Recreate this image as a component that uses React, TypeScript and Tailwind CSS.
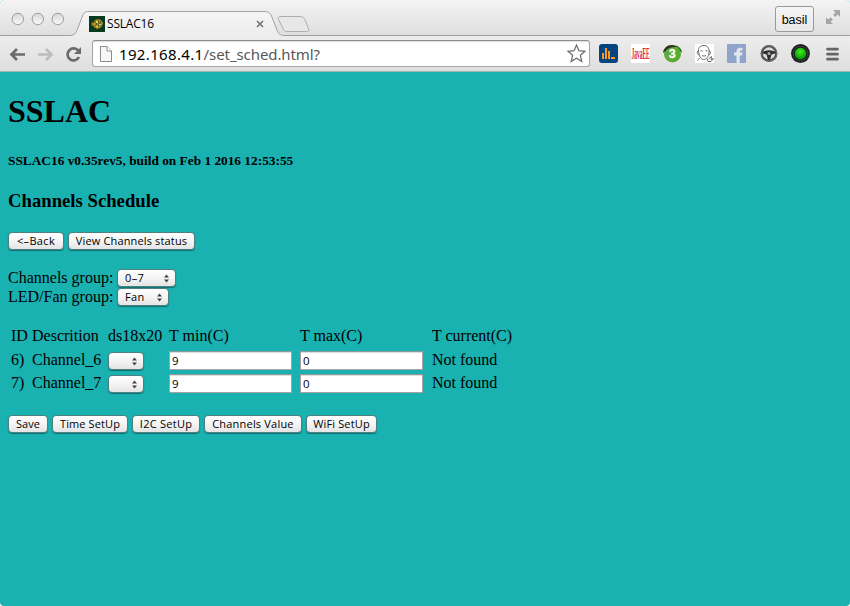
import React from "react";

const lucida = "font-['Open_Sans','Noto_Sans',sans-serif]";

function Button({ label, className }: { label: string; className: string }) {
  return (
    <button
      className={`h-[18px] shrink-0 whitespace-nowrap rounded-[4px] border border-[#4f8080] bg-linear-to-b from-white via-[#f6f6f6] via-45% to-[#e4e4e4] text-center text-[11px] leading-[16px] text-black shadow-[0_1px_1px_rgba(0,60,60,0.55)] ${lucida} ${className}`}
    >
      {label}
    </button>
  );
}

function Select({ value, className }: { value: string; className: string }) {
  return (
    <div
      className={`flex h-[18px] shrink-0 items-center justify-between rounded-[4px] border border-[#4f8080] bg-linear-to-b from-white via-[#f6f6f6] via-45% to-[#e4e4e4] pr-[5px] pl-[7px] text-[11px] leading-[16px] tracking-[0.400px] text-black shadow-[0_1px_1px_rgba(0,60,60,0.55)] ${lucida} ${className}`}
    >
      <span>{value}</span>
      <svg width="7" height="9" viewBox="0 0 7 9" fill="#444">
        <path d="M3.500 0.500 6 3.500H1ZM3.500 8.500 1 5.500H6Z" />
      </svg>
    </div>
  );
}

function Field({ value }: { value: string }) {
  return (
    <input
      readOnly
      value={value}
      className={`mt-px block h-[19px] w-[123px] border border-[#a5a5a5] border-t-[#8c9c9c] bg-white px-[2px] text-[11.500px] leading-[16px] text-black shadow-[inset_0_1px_0_#ddd] outline-none ${lucida}`}
    />
  );
}

function TabStrip() {
  return (
    <div className="relative flex h-[36px] items-start bg-linear-to-b from-[#f4f4f4] to-[#dedede]">
      <svg className="absolute inset-0" width="850" height="36" viewBox="0 0 850 36">
        <defs>
          <linearGradient id="tab" x1="0" y1="0" x2="0" y2="1">
            <stop offset="0" stopColor="#f5f5f5" />
            <stop offset="1" stopColor="#ededed" />
          </linearGradient>
          <linearGradient id="light" x1="0" y1="0" x2="0" y2="1">
            <stop offset="0" stopColor="#d6d6d6" />
            <stop offset="1" stopColor="#fafafa" />
          </linearGradient>
        </defs>
        <path
          d="M0 35.500H70C75 35.500 76 33 77.500 29L82.500 16C84 12.500 85 11.500 89 11.500H264C268 11.500 270 12.500 271.500 16L277 30C278.500 34 280 35.500 285 35.500H850V37H0Z"
          fill="url(#tab)"
          stroke="#a0a0a0"
        />
        <path
          d="M281 16.500H300C302.500 16.500 304 17.500 305 20L308.500 28.500C309.500 31 308.500 31.500 306.500 31.500H288C285 31.500 284 31 283 28.500L278.500 19.500C277.500 17.500 278.500 16.500 281 16.500Z"
          fill="#e7e7e7"
          stroke="#acacac"
        />
        {[17.8, 37.8, 57.8].map((x) => (
          <circle key={x} cx={x} cy="19" r="5.700" fill="url(#light)" stroke="#9d9d9d" />
        ))}
        <g fill="#a5a5a5">
          <path d="M833 10H840V17L837.600 14.600 835.300 16.900 833.100 14.700 835.400 12.400Z" />
          <path d="M826 24V17.200L828.300 19.500 830.600 17.200 832.900 19.500 830.600 21.700 833 24Z" />
        </g>
      </svg>
      <div className="relative mt-[16px] ml-[89px] flex h-[16px] w-[176px] items-center">
        <svg width="16" height="16" viewBox="0 0 16 16">
          <rect width="16" height="16" fill="#063b20" />
          <path d="M2 6 4.500 7 6 4 9 3 12 4 14 7 13 10 11 12 8 13 5 11 4 9 2 10 3 8Z" fill="#b98d25" />
          <path d="M6 5 8 8 6 10M9 4 10 7 9 11M12 5 11 8 12 10" fill="none" stroke="#2d4920" strokeWidth="0.800" />
          <path d="M7 5H9V7H7ZM10 8H12V9H10ZM7 10H9V11H7Z" fill="#efce55" />
        </svg>
        <span className={`ml-[2px] text-[12px] leading-[16px] tracking-[-0.200px] text-black ${lucida}`}>SSLAC16</span>
        <svg className="mr-[1px] ml-auto" width="8" height="8" viewBox="0 0 8 8">
          <path d="M1 1 7 7M7 1 1 7" stroke="#6d6d6d" strokeWidth="1.500" />
        </svg>
      </div>
      <div className="relative mt-[6px] mr-[36px] ml-auto h-[26px] w-[39px] rounded-[3px] border border-[#999] bg-linear-to-b from-[#f5f5f5] to-[#e8e8e8] text-center font-['Liberation_Sans',sans-serif] text-[12.500px] leading-[26px] text-black">
        basil
      </div>
    </div>
  );
}

function Toolbar() {
  return (
    <div className="flex h-[36px] items-center border-b border-[#a4b4b4] bg-linear-to-b from-[#ededed] to-[#dedede]">
      <svg width="92" height="34" viewBox="0 0 92 34" fill="none">
        <path d="M25 17.500H12M17 12 11.500 17.500 17 23" stroke="#6b6b6b" strokeWidth="2.700" />
        <path d="M38 17.500H51M46 12 51.500 17.500 46 23" stroke="#bcbcbc" strokeWidth="2.700" />
        <path d="M78.500 14A6 6 0 1 0 79 20" stroke="#6b6b6b" strokeWidth="2.700" />
        <path d="M81 10V17H74Z" fill="#6b6b6b" />
      </svg>
      <div className="flex h-[27px] w-[498px] items-center rounded-[3px] border border-[#a6a6a6] border-t-[#8e8e8e] bg-white shadow-[inset_0_1px_1px_#ddd]">
        <svg className="ml-[7px]" width="12" height="16" viewBox="0 0 12 16">
          <path d="M0.500 0.500H7L11.500 5V15.500H0.500Z" fill="#f7f7f7" stroke="#8b8b8b" />
          <path d="M7 0.500V5H11.500" fill="white" stroke="#8b8b8b" />
        </svg>
        <span className="ml-[7px] font-['Noto_Sans',sans-serif] text-[15px] leading-[20px] tracking-[-0.080px] text-[#585858]">
          <span className="tracking-[0.350px] text-black">192.168.4.1</span>/set_sched.html?
        </span>
        <svg className="mr-[3px] ml-auto" width="19" height="19" viewBox="0 0 18 18">
          <path
            d="M9 1 11.300 6.300 17 6.900 12.700 10.700 14 16.500 9 13.500 4 16.500 5.300 10.700 1 6.900 6.700 6.300Z"
            fill="white"
            stroke="#6f6f6f"
            strokeWidth="1.200"
          />
        </svg>
      </div>
      <div className="ml-[9px] flex gap-[13px]">
        <svg width="19" height="19" viewBox="0 0 19 19">
          <rect width="19" height="19" rx="3" fill="#07447f" />
          <path d="M3 9H5V15H3ZM6 4H8V15H6ZM9 7H11V15H9ZM12 13H16V15H12Z" fill="#f79a1d" />
        </svg>
        <div className="flex h-[19px] w-[19px] items-center justify-center bg-white">
          <span className="scale-x-[0.340] font-['Liberation_Serif',serif] text-[16px] leading-[19px] font-bold text-[#e02030]">
            JavaEE
          </span>
        </div>
        <svg width="19" height="19" viewBox="0 0 19 19">
          <path d="M12 1.500C16 2 18.500 4.500 19 8.500L15 7Z" fill="#2f6423" />
          <circle cx="9.500" cy="10" r="8.500" fill="#5aab35" />
          <path d="M0 9C0.500 4 4.500 0.500 9.500 1C11.500 1 13 2 14 3C9 2.500 4.500 4 2.500 7Z" fill="#28351f" />
          <text x="9.300" y="14" textAnchor="middle" fontFamily="Liberation Sans, sans-serif" fontWeight="bold" fontSize="12.500" fill="white" stroke="white" strokeWidth="0.300">
            3
          </text>
        </svg>
        <svg width="19" height="19" viewBox="0 0 19 19" fill="none" stroke="#4a4a4a" strokeWidth="0.800">
          <rect width="19" height="19" fill="white" stroke="none" />
          <path d="M3.500 7C3 3 6 1.500 9 1.500S14.500 4 14 8C14 13 11 15.500 8.500 15.500S4 12 3.500 7Z" />
          <path d="M3.500 7C1.500 7 2 10.500 4 11M14 7C16 7 16 10 14 11" />
          <path d="M5.500 6.800H7.500M10.500 6.800H12.500M7 11.500Q9 12.800 11 11.500M4.500 14 2.500 16.500M12 14.500 13 17.500H16L18.500 14.500 16 15.500 16.500 12.500 13.500 15" />
        </svg>
        <svg width="19" height="19" viewBox="0 0 19 19">
          <rect width="19" height="19" rx="1" fill="#8fa4ca" />
          <path d="M9.500 19V11.500H7V8.500H9.500V7.500C9.500 5 11 3.800 13.500 3.800H15.500V6.500H14C13 6.500 12.700 6.900 12.700 7.800V8.500H15.500L15 11.500H12.700V19Z" fill="#e2e7f0" />
        </svg>
        <svg width="19" height="19" viewBox="0 0 19 19">
          <circle cx="10" cy="9.500" r="7.300" fill="#ddd" stroke="#454545" strokeWidth="2.300" />
          <circle cx="10" cy="9.500" r="7.600" fill="none" stroke="#929292" strokeWidth="0.600" />
          <path d="M3 8Q10 4.500 17 8L16 9.500 12.500 10.500 11 16H9L7.500 10.500 4 9.500Z" fill="#303030" />
          <circle cx="10" cy="9.500" r="1.500" fill="#aaa" />
        </svg>
        <svg width="19" height="19" viewBox="0 0 19 19">
          <defs>
            <radialGradient id="lamp" cy="0.350">
              <stop offset="0" stopColor="#44ee20" />
              <stop offset="1" stopColor="#0caa08" />
            </radialGradient>
          </defs>
          <circle cx="9.500" cy="9.500" r="9.400" fill="#1b211d" />
          <circle cx="9.500" cy="9.500" r="7.300" fill="none" stroke="#4a4b4a" strokeWidth="0.700" />
          <circle cx="9.500" cy="9.500" r="5.700" fill="url(#lamp)" />
        </svg>
      </div>
      <svg className="ml-[16px]" width="13" height="14" viewBox="0 0 13 14" stroke="#666" strokeWidth="2.700" strokeLinecap="round">
        <path d="M1.500 2.200H11.500M1.500 7.200H11.500M1.500 12.200H11.500" />
      </svg>
    </div>
  );
}

const channels = [
  { id: "6)", name: "Channel_6", min: "9", max: "0" },
  { id: "7)", name: "Channel_7", min: "9", max: "0" },
];

const columns = "ml-[3px] grid grid-cols-[21px_76px_61px_131px_132px_120px] whitespace-nowrap";

export default function App() {
  return (
    <div className="h-[606px] w-[850px] overflow-hidden bg-white">
      <div className="flex h-full flex-col overflow-hidden rounded-[4px] bg-[#1ab1b1]">
        <TabStrip />
        <Toolbar />
        <main className="flex-1 px-[8px] pt-[21px] font-['Liberation_Serif',serif] text-[16px] leading-[19px] text-black">
          <h1 className="text-[32px] leading-[36px] font-bold">SSLAC</h1>
          <h5 className="mt-[24px] text-[13.330px] leading-[16px] font-bold">
            SSLAC16 v0.35rev5, build on Feb 1 2016 12:53:55
          </h5>
          <h3 className="mt-[21px] text-[18.720px] leading-[22px] font-bold">Channels Schedule</h3>
          <div className="mt-[20px] flex gap-[4px]">
            <Button label="<–Back" className="w-[56px] tracking-[0.350px]" />
            <Button label="View Channels status" className="w-[127px] tracking-[0.150px]" />
          </div>
          <div className="mt-[18px] flex h-[19px]">
            <span className="w-[109px]">Channels group:</span>
            <Select value="0–7" className="mt-px w-[59px]" />
          </div>
          <div className="flex h-[19px]">
            <span className="w-[109px]">LED/Fan group:</span>
            <Select value="Fan" className="mt-px w-[52px]" />
          </div>
          <div className="mt-[20px]">
            <div className={`${columns} h-[24px]`}>
              <span>ID</span>
              <span>Descrition</span>
              <span>ds18x20</span>
              <span>T min(C)</span>
              <span>T max(C)</span>
              <span>T current(C)</span>
            </div>
            {channels.map((c) => (
              <div key={c.id} className={`${columns} h-[23px]`}>
                <span>{c.id}</span>
                <span>{c.name}</span>
                <Select value="" className="mt-[2px] w-[36px]" />
                <Field value={c.min} />
                <Field value={c.max} />
                <span>Not found</span>
              </div>
            ))}
          </div>
          <div className="mt-[19px] flex gap-[4px]">
            <Button label="Save" className="w-[40px]" />
            <Button label="Time SetUp" className="w-[76px] tracking-[0.100px]" />
            <Button label="I2C SetUp" className="w-[68px] tracking-[0.250px]" />
            <Button label="Channels Value" className="w-[98px] tracking-[0.200px]" />
            <Button label="WiFi SetUp" className="w-[71px] tracking-[0.150px]" />
          </div>
        </main>
      </div>
    </div>
  );
}
